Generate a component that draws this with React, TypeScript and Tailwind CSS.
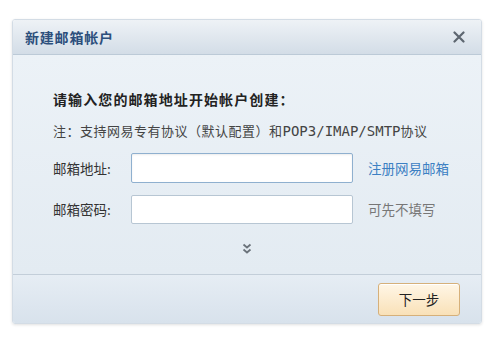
import React from "react";

export default function App() {
  const font = { fontFamily: '"Noto Sans CJK SC", "Noto Sans", sans-serif' };
  return (
    <div className="w-[503px] h-[349px] bg-white pt-[19px] pl-[12px]" style={font}>
      <div className="w-[470px] h-[305px] flex flex-col rounded-[3px] border border-[#d3dce5] shadow-[0_1px_3px_rgba(0,0,0,0.12)] overflow-hidden">
        <div className="h-[35px] flex items-center justify-between pl-[12px] pr-[16px] bg-gradient-to-b from-[#eef2f6] to-[#d3dde7] border-b border-[#bccad7]">
          <span className="text-[14px] font-bold text-[#2c4f7c] tracking-[0.8px]">新建邮箱帐户</span>
          <svg width="12" height="12" viewBox="0 0 12 12">
            <path d="M1.5 1.5 L10.5 10.5 M10.5 1.5 L1.5 10.5" stroke="#5d6670" strokeWidth="2.2" strokeLinecap="round" />
          </svg>
        </div>
        <div className="flex-1 flex flex-col bg-gradient-to-b from-[#ecf2f7] to-[#e3ebf2] pl-[40px] pt-[34px]">
          <div className="text-[14px] font-bold text-[#222] leading-[20px] tracking-[1.1px]">请输入您的邮箱地址开始帐户创建：</div>
          <div className="text-[13px] text-[#444] leading-[20px] mt-[12px] tracking-[0.5px] whitespace-nowrap">
            注：支持网易专有协议（默认配置）和
            <span className="text-[14px] tracking-[0px]" style={{ fontFamily: '"DejaVu Sans Mono", monospace' }}>POP3/IMAP/SMTP</span>
            协议
          </div>
          <div className="flex items-center mt-[12px]">
            <span className="w-[78px] text-[13.5px] text-[#333]">邮箱地址:</span>
            <div className="w-[222px] h-[30px] bg-white border border-[#8fb0cf] rounded-[2px] shadow-[inset_0_1px_2px_rgba(0,0,0,0.08)]" />
            <span className="ml-[15px] text-[13.5px] text-[#3c80c3]">注册网易邮箱</span>
          </div>
          <div className="flex items-center mt-[12px]">
            <span className="w-[78px] text-[13.5px] text-[#333]">邮箱密码:</span>
            <div className="w-[222px] h-[29px] bg-white border border-[#b7c6d3] rounded-[2px]" />
            <span className="ml-[15px] text-[13.5px] text-[#777]">可先不填写</span>
          </div>
          <div className="flex justify-center pr-[40px] mt-[19px]">
            <svg width="10" height="12" viewBox="0 0 10 12">
              <path d="M1.5 1.5 L5 4.5 L8.5 1.5 M1.5 6.5 L5 9.5 L8.5 6.5" stroke="#6b737b" strokeWidth="1.8" fill="none" />
            </svg>
          </div>
        </div>
        <div className="h-[49px] border-t border-[#c3ced9] bg-gradient-to-b from-[#e6edf4] to-[#d8e2ec] flex justify-end pt-[8px] pr-[21px]">
          <button className="w-[82px] h-[33px] rounded-[3px] border border-[#d6b07a] bg-gradient-to-b from-[#fff6e6] to-[#f9e1b8] text-[13.5px] text-[#222] shadow-[inset_0_1px_0_#fff]">下一步</button>
        </div>
      </div>
    </div>
  );
}
